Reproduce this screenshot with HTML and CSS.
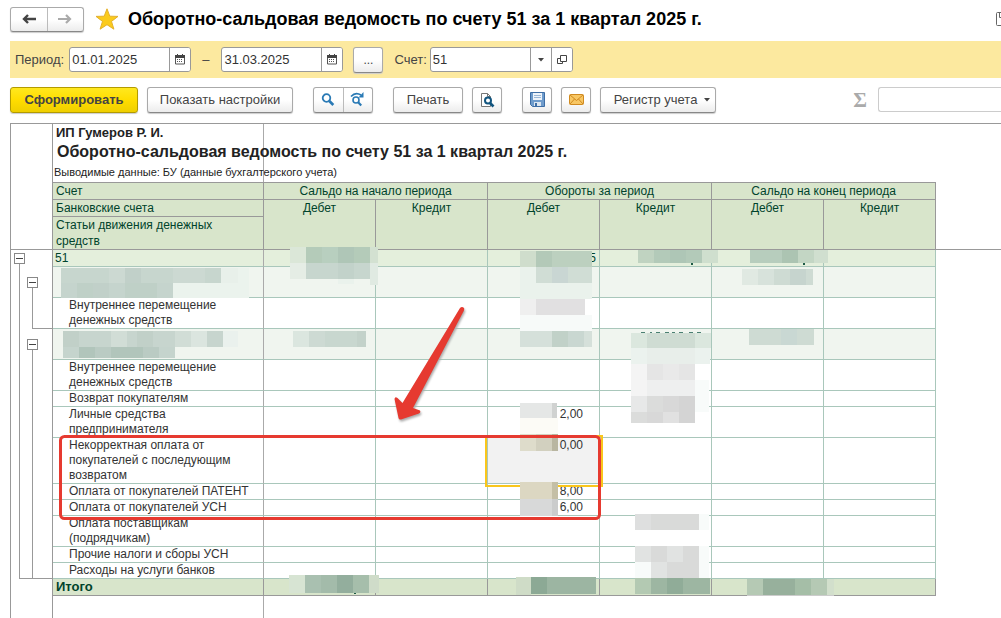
FILE: index.html
```html
<!DOCTYPE html>
<html lang="ru">
	<head>
		<meta charset="UTF-8">
		<title>Оборотно-сальдовая ведомость по счету 51</title>
		<link rel="stylesheet" href="styles.css">
	</head>
	<body>
		<header class="head">
			<div class="btnGroup nav">
				<button type="button" aria-label="Назад"><svg width="14" height="10" viewBox="0 0 14 10"><path d="M14 5H3M6 1L2 5l4 4" fill="none" stroke="#444" stroke-width="2.4"/></svg></button>
				<button type="button" aria-label="Вперед"><svg width="14" height="10" viewBox="0 0 14 10"><path d="M0 5h11M8 1l4 4-4 4" fill="none" stroke="#aaa" stroke-width="2.2"/></svg></button>
			</div>
			<svg class="star" width="24" height="22" viewBox="0 0 24 22"><path d="M12 .8l2.8 7.4 8.2.2-6.500 5 2.400 7.800L12 16.700l-6.900 4.500 2.400-7.800L1 8.400l8.200-.2z" fill="#fbcb1c" stroke="#e3b02c"/></svg>
			<h1>Оборотно-сальдовая ведомость по счету 51 за 1 квартал 2025 г.</h1>
			<svg class="save" width="5" height="15" viewBox="0 0 5 15"><path d="M6 .5H1.500q-1 0-1 1v11q0 1 1 1H6M3.500 1v4.500H6" fill="none" stroke="#666"/></svg>
		</header>

		<div class="period">
			<label for="from">Период:</label>
			<div class="field date">
				<input type="text" id="from" value="01.01.2025">
				<button type="button" aria-label="Выбрать дату"><svg width="10" height="11" viewBox="0 0 10 11"><path d="M.5 2.500h9v7.500h-9z" fill="#fff" stroke="#555"/><path d="M0 1h10v3H0zM2 0h1v2H2zM7 0h1v2H7z" fill="#444"/><path d="M2 5.500h6M2 7.500h6" stroke="#555" stroke-dasharray="1 1"/></svg></button>
			</div>
			<label for="to" class="dash">–</label>
			<div class="field date">
				<input type="text" id="to" value="31.03.2025">
				<button type="button" aria-label="Выбрать дату"><svg width="10" height="11" viewBox="0 0 10 11"><path d="M.5 2.500h9v7.500h-9z" fill="#fff" stroke="#555"/><path d="M0 1h10v3H0zM2 0h1v2H2zM7 0h1v2H7z" fill="#444"/><path d="M2 5.500h6M2 7.500h6" stroke="#555" stroke-dasharray="1 1"/></svg></button>
			</div>
			<button type="button" class="btn icon more">...</button>
			<label for="account">Счет:</label>
			<div class="field account">
				<input type="text" id="account" value="51">
				<button type="button" aria-label="Список"><svg width="6" height="4" viewBox="0 0 6 4"><path d="M0 0h6L3 3.500z" fill="#444"/></svg></button>
				<button type="button" aria-label="Открыть"><svg width="10" height="10" viewBox="0 0 10 10"><path d="M3.500.5h6v6h-6zM3 3.500H.5v5h5V7" fill="none" stroke="#444"/></svg></button>
			</div>
		</div>

		<div class="tools">
			<button type="button" class="btn main">Сформировать</button>
			<button type="button" class="btn settings">Показать настройки</button>
			<div class="btnGroup find">
				<button type="button" aria-label="Найти"><svg width="14" height="14" viewBox="0 0 14 14"><circle cx="5.500" cy="5" r="3.800" fill="none" stroke="#2a7ab5" stroke-width="1.800"/><path d="M8.300 8l4 4" stroke="#2a7ab5" stroke-width="2.600"/></svg></button>
				<button type="button" aria-label="Найти далее"><svg width="15" height="15" viewBox="0 0 15 15"><circle cx="6" cy="8" r="3" fill="none" stroke="#2a7ab5" stroke-width="1.600"/><path d="M8.200 10.200l3 3.200" stroke="#2a7ab5" stroke-width="2.200"/><path d="M1 4.500Q5.500-.5 11 3" fill="none" stroke="#2a7ab5" stroke-width="1.600"/><path d="M13.500 0v5.500H8.500z" fill="#2a7ab5"/></svg></button>
			</div>
			<button type="button" class="btn print">Печать</button>
			<button type="button" class="btn icon view" aria-label="Просмотр"><svg width="16" height="16" viewBox="0 0 16 16"><path d="M2.500 1.500h6l3 3v10h-9z" fill="#fff" stroke="#777"/><path d="M8.500 1.500v3h3" fill="none" stroke="#777"/><circle cx="9" cy="8.500" r="3" fill="#fff" stroke="#12557f" stroke-width="2"/><path d="M11 11l3.500 3.500" stroke="#12557f" stroke-width="2.600"/></svg></button>
			<button type="button" class="btn icon" aria-label="Сохранить"><svg width="15" height="15" viewBox="0 0 15 15"><path d="M.5.5h14v14h-12l-2-2z" fill="#6f9ccc" stroke="#3e6ea5"/><path d="M3 1h9v7H3z" fill="#eef4fa"/><path d="M4 3.500h7M4 5.500h7" stroke="#9bb7d6"/><path d="M4 10h7v4H4z" fill="#dce6f0"/><path d="M5 11h2v3H5z" fill="#3e6ea5"/></svg></button>
			<button type="button" class="btn icon" aria-label="Отправить"><svg width="15" height="11" viewBox="0 0 15 11"><rect x=".5" y=".5" width="14" height="10" rx="1" fill="#f8c764" stroke="#d08a20"/><path d="M1 1l6.500 5.500L14 1M1 10l4.500-5M14 10L9.500 5" fill="none" stroke="#d08a20"/></svg></button>
			<button type="button" class="btn register">Регистр учета <svg width="6" height="4" viewBox="0 0 6 4"><path d="M0 0h6L3 3.500z" fill="#444"/></svg></button>
			<label for="sum" class="sigma">Σ</label>
			<input type="text" id="sum" class="sum">
		</div>

		<div class="sheet">
			<div class="tree">
				<div class="treeHead"></div>
				<div class="treeBody">
					<button type="button" class="node" aria-label="Свернуть"></button>
					<div class="stem all">
						<button type="button" class="node" aria-label="Свернуть"></button>
						<div class="stem first"></div>
						<button type="button" class="node" aria-label="Свернуть"></button>
						<div class="stem last"></div>
					</div>
				</div>
			</div>

			<div class="report">
				<div class="titles">
					<p class="firm">ИП Гумеров Р. И.</p>
					<h2>Оборотно-сальдовая ведомость по счету 51 за 1 квартал 2025 г.</h2>
					<p class="note">Выводимые данные: БУ (данные бухгалтерского учета)</p>
				</div>
				<table>
					<colgroup>
						<col class="name"><col class="num"><col class="num"><col class="num"><col class="num"><col class="num"><col class="num"><col>
					</colgroup>
					<thead>
						<tr><th class="left">Счет</th><th colspan="2">Сальдо на начало периода</th><th colspan="2">Обороты за период</th><th colspan="2">Сальдо на конец периода</th><td rowspan="3" class="rest"></td></tr>
						<tr><th class="left">Банковские счета</th><th rowspan="2">Дебет</th><th rowspan="2">Кредит</th><th rowspan="2">Дебет</th><th rowspan="2">Кредит</th><th rowspan="2">Дебет</th><th rowspan="2">Кредит</th></tr>
						<tr><th class="left">Статьи движения денежных средств</th></tr>
					</thead>
					<tbody>
						<tr class="acc"><td>51</td><td></td><td></td><td>5</td><td></td><td></td><td></td></tr>
						<tr class="bank"><td></td><td></td><td></td><td></td><td></td><td></td><td></td></tr>
						<tr><td>Внутреннее перемещение денежных средств</td><td></td><td></td><td></td><td></td><td></td><td></td></tr>
						<tr class="bank"><td></td><td></td><td></td><td></td><td></td><td></td><td></td></tr>
						<tr><td>Внутреннее перемещение денежных средств</td><td></td><td></td><td></td><td></td><td></td><td></td></tr>
						<tr><td>Возврат покупателям</td><td></td><td></td><td></td><td></td><td></td><td></td></tr>
						<tr><td>Личные средства предпринимателя</td><td></td><td></td><td>2,00</td><td></td><td></td><td></td></tr>
						<tr><td>Некорректная оплата от покупателей с последующим возвратом</td><td></td><td></td><td class="selected">0,00</td><td></td><td></td><td></td></tr>
						<tr><td>Оплата от покупателей ПАТЕНТ</td><td></td><td></td><td>8,00</td><td></td><td></td><td></td></tr>
						<tr><td>Оплата от покупателей УСН</td><td></td><td></td><td>6,00</td><td></td><td></td><td></td></tr>
						<tr><td>Оплата поставщикам (подрядчикам)</td><td></td><td></td><td></td><td></td><td></td><td></td></tr>
						<tr><td>Прочие налоги и сборы УСН</td><td></td><td></td><td></td><td></td><td></td><td></td></tr>
						<tr><td>Расходы на услуги банков</td><td></td><td></td><td></td><td></td><td></td><td></td></tr>
					</tbody>
					<tfoot>
						<tr class="total"><td>Итого</td><td></td><td></td><td></td><td></td><td></td><td></td></tr>
					</tfoot>
				</table>
			</div>

			<!-- скрытые данные, рамка и стрелка поверх таблицы -->
			<svg class="marks" width="991" height="495" viewBox="10 123 991 495">
				<g class="mosaic">
					<!-- названия счетов -->
					<path fill="#c7d6ce" d="M61 268h160v15H61z"/><path fill="#c5d4cd" d="M61 283h112v15H61z"/>
					<path fill="#c1d0c9" d="M125 268h16v15h-16zM93 283h16v15H93z"/><path fill="#bfd0c7" d="M77 283h16v15H77zM125 283h32v15h-32z"/>
					<path fill="#ccd9d2" d="M109 268h16v15h-16zM173 268h32v15h-32z"/><path fill="#e8f0ea" d="M221 268h17v15h-17z"/><path fill="#ebf3ed" d="M173 283h76v15h-76zM238 268h11v15h-11z"/>
					<path fill="#c7d5ce" d="M63 331h160v16H63z"/><path fill="#c1d0c8" d="M63 331h16v16H63zM137 331h16v16h-16z"/><path fill="#d1ddd6" d="M111 331h16v16h-16zM175 331h16v16h-16z"/><path fill="#dbe5df" d="M191 331h16v16h-16z"/><path fill="#eaf1ed" d="M223 331h15v16h-15z"/>
					<path fill="#bacbc3" d="M63 347h112v11H63z"/><path fill="#b1c5bb" d="M79 347h16v11H79zM111 347h32v11h-32z"/><path fill="#c5d4cd" d="M63 347h16v11H63zM159 347h16v11h-16z"/>
					<!-- сальдо на начало -->
					<path fill="#dbe7d8" d="M290 247h16v16h-16z"/><path fill="#b4cbb9" d="M306 247h64v16h-64z"/><path fill="#b8cfbf" d="M322 247h16v16h-16z"/><path fill="#afc6b7" d="M338 247h16v16h-16z"/><path fill="#d3e1d1" d="M370 247h8v16h-8z"/>
					<path fill="#e5ede5" d="M290 263h16v16h-16z"/><path fill="#c7d6ce" d="M306 263h64v16h-64z"/><path fill="#c2d2ca" d="M338 263h16v16h-16z"/><path fill="#e0eae2" d="M370 263h8v22h-8z"/><path fill="#eaf2ec" d="M338 279h16v5h-16z"/>
					<path fill="#dbe6df" d="M293 331h16v16h-16z"/><path fill="#cddad3" d="M309 331h16v16h-16z"/><path fill="#c8d7cf" d="M325 331h32v16h-32z"/><path fill="#c3d2ca" d="M357 331h9v16h-9z"/>
					<path fill="#d7e4d3" d="M289 575h16v18h-16z"/><path fill="#a9c0b0" d="M305 575h16v18h-16z"/><path fill="#a3bbaa" d="M321 575h16v18h-16z"/><path fill="#93ae9d" d="M337 575h16v18h-16z"/><path fill="#a6beab" d="M353 575h16v18h-16z"/><path fill="#cfdcc9" d="M369 575h10v18h-10z"/>
					<!-- обороты, дебет -->
					<path fill="#cfddcc" d="M520 251h16v16h-16z"/><path fill="#b3c9b8" d="M536 251h16v16h-16z"/><path fill="#bcd0bf" d="M552 251h40v16h-40z"/>
					<path fill="#eaf2ec" d="M520 267h16v16h-16zM520 283h72v16h-72z"/><path fill="#d0ddd5" d="M536 267h56v16h-56z"/><path fill="#c9d6d3" d="M552 267h16v16h-16z"/>
					<path fill="#fff" d="M585 299h7v16h-7z"/><path fill="#efefef" d="M520 299h16v16h-16z"/><path fill="#e1e0e1" d="M536 299h49v16h-49z"/><path fill="#f7faf9" d="M520 315h72v16h-72z"/>
					<path fill="#d5e0da" d="M520 331h72v16h-72z"/><path fill="#c1d1c8" d="M552 331h16v16h-16z"/><path fill="#c9d7d1" d="M568 331h16v16h-16z"/>
					<path fill="#e5e7e6" d="M520 403h32v15h-32z"/><path fill="#d0d2d1" d="M552 403h5v15h-5z"/><path fill="#fcfbf6" d="M520 418h38v16h-38z"/>
					<path fill="#dedccb" d="M520 434h16v17h-16z"/><path fill="#d2d0bf" d="M536 434h16v17h-16z"/><path fill="#b9b6a1" d="M552 434h6v17h-6z"/>
					<path fill="#dcd7c2" d="M520 482h32v17h-32z"/><path fill="#c4bfa5" d="M552 482h6v17h-6z"/><path fill="#d8d9d9" d="M520 499h32v17h-32z"/><path fill="#cbcccc" d="M552 499h6v17h-6z"/>
					<path fill="#cfdcc7" d="M516 577h15v18h-15z"/><path fill="#8ca995" d="M531 577h16v17h-16z"/><path fill="#9cb5a2" d="M547 577h49v17h-49z"/>
					<!-- обороты, кредит -->
					<path fill="#c0d3c1" d="M638 250h16v13h-16z"/><path fill="#b3cab9" d="M654 250h48v13h-48z"/><path fill="#aec6b6" d="M670 250h16v13h-16z"/><path fill="#cfdfce" d="M702 250h16v13h-16z"/>
					<path fill="#4b8072" d="M641 332h4v1h-4zM650 332h2v1h-2zM656 332h4v1h-4zM665 332h4v1h-4zM672 332h3v1h-3zM679 332h4v1h-4zM689 332h4v1h-4zM697 332h4v1h-4z"/>
					<path fill="#dbe7de" d="M631 333h80v15h-80z"/><path fill="#cfdcd3" d="M647 333h48v15h-48z"/><path fill="#ebf2ee" d="M631 348h79v16h-79z"/><path fill="#e8eeea" d="M647 348h48v16h-48z"/>
					<path fill="#fff" d="M695 364h15v16h-15zM635 530h74v16h-74z"/><path fill="#f4f4f4" d="M631 364h16v32h-16z"/><path fill="#e5e5e5" d="M647 364h48v16h-48z"/><path fill="#e9e9e9" d="M663 364h16v16h-16z"/><path fill="#eeefef" d="M647 380h48v16h-48z"/><path fill="#f8fbfa" d="M695 380h14v32h-14zM699 514h10v16h-10zM699 546h10v32h-10zM635 562h16v16h-16z"/>
					<path fill="#e7e8e8" d="M631 396h16v16h-16z"/><path fill="#dbdcdb" d="M647 396h16v16h-16zM631 412h16v11h-16z"/><path fill="#d8d8d8" d="M663 396h16v16h-16zM647 412h16v11h-16z"/><path fill="#d4d4d4" d="M679 396h16v27h-16z"/><path fill="#e1e1e1" d="M663 412h16v11h-16z"/>
					<path fill="#dedfdf" d="M635 514h16v16h-16z"/><path fill="#d9dad9" d="M651 514h48v16h-48zM651 546h48v32h-48z"/><path fill="#e1e3e2" d="M635 546h16v16h-16zM667 546h16v16h-16zM651 562h16v16h-16z"/>
					<path fill="#b3c9b2" d="M635 578h16v16h-16z"/><path fill="#9db6a2" d="M651 578h59v16h-59z"/><path fill="#90ac98" d="M667 578h16v16h-16z"/>
					<!-- сальдо на конец -->
					<path fill="#b7cdbd" d="M750 250h32v13h-32z"/><path fill="#acc4b2" d="M782 250h16v13h-16z"/><path fill="#c3d6c4" d="M798 250h16v13h-16z"/><path fill="#d0dfcf" d="M814 250h14v13h-14z"/>
					<path fill="#e0e9e2" d="M742 269h16v16h-16z"/><path fill="#d7e2db" d="M758 269h16v16h-16z"/><path fill="#cedbd3" d="M774 269h39v16h-39z"/><path fill="#c6d4ce" d="M790 269h16v16h-16z"/>
					<path fill="#cedbd3" d="M749 329h65v16h-65z"/><path fill="#c9d8d3" d="M781 329h16v16h-16z"/>
					<path fill="#b5c9b4" d="M747 579h80v16h-80z"/><path fill="#97b09c" d="M763 579h32v16h-32z"/><path fill="#a5bea7" d="M795 579h16v16h-16z"/><path fill="#d2dfcc" d="M827 579h7v16h-7z"/><path fill="#ccc" d="M747 595h87v1h-87z"/>
					<path fill="#1d5a45" d="M691 263h2v2h-2zM803 263h2v2h-2zM354 593h2v1h-2z"/>
				</g>
				<rect class="frame" x="60.500" y="436.500" width="539" height="82" rx="4"/>
				<path class="arrow" d="M460 308q2-2 4 0 .5 1-.3 3L413 408l7 2.500q1 2-1 3l-18 6q-2 .5-2.500-1.500L394.500 399q.5-3 3-1l5 5z"/>
			</svg>
		</div>
	</body>
</html>
```
FILE: styles.css
```css
*{ box-sizing: border-box;}
body{ margin: 0; padding-left: 10px; min-height: 100vh; display: flex; flex-direction: column; overflow: hidden; background: #fff; color: #444; font: 13px/16px "Liberation Sans", Arial, sans-serif;}
button,input{ margin: 0; padding: 0; font: inherit; color: #444;}
h1,h2,p{ margin: 0;}
svg{ display: block; flex: none;}

/* шапка */
.head{ display: flex; align-items: center; height: 41px; padding-bottom: 3px;}
.head h1{ margin-left: 9px; font-size: 18px; line-height: 24px; color: #000; white-space: nowrap;}
.star{ margin-left: 11px;}
.save{ margin-left: auto;}

.btn,.btnGroup{ height: 26px; flex: none; border: 1px solid #aaa; border-bottom-color: #888; border-radius: 3px; background: linear-gradient(#fff 50%, #ececec); box-shadow: 0 1px 1px #ccc;}
.btn{ display: flex; align-items: center; justify-content: center; gap: 7px; white-space: nowrap;}
.btnGroup{ display: flex;}
.btnGroup button{ flex: 1; display: flex; align-items: center; justify-content: center; border: 0; background: none;}
.btnGroup button + button{ border-left: 1px solid #bbb;}
.nav{ width: 74px; height: 25px;}

/* период */
.period{ display: flex; align-items: center; height: 37px; padding-left: 5px; background: #fce99f;}
.field{ display: flex; height: 25px; border: 1px solid #999; border-radius: 3px; background: #fff; overflow: hidden;}
.field input{ flex: 1; min-width: 0; padding-left: 2px; border: 0; background: none; color: #333;}
.field button{ width: 21px; display: flex; align-items: center; justify-content: center; border: 0; border-left: 1px solid #999; background: #fff;}
.date{ width: 122px; margin-left: 5px;}
.dash{ margin-left: 11px; margin-right: 7px;}
.account{ width: 143px; margin-left: 3px;}
.icon{ width: 30px;}
.more{ margin: 0 11px 0 10px; font-size: 12px;}

/* кнопки */
.tools{ display: flex; align-items: center; height: 45px; flex: none; padding-bottom: 2px;}
.tools .icon{ margin-right: 9px;}
.main{ width: 128px; border-color: #b39b00; background: linear-gradient(#ffe81f, #ffdd00 50%, #efcf00); font-weight: bold;}
.settings{ width: 146px; margin-left: 9px;}
.find{ width: 60px; margin: 0 20px;}
.print{ width: 70px; margin-right: 9px;}
.tools .view{ margin-right: 20px;}
.register{ width: 116px; padding-left: 8px;}
.sigma{ margin-left: auto; margin-right: 11px; font: bold 21px/24px "Liberation Serif", serif; color: #aaa;}
.sum{ width: 123px; height: 25px; border: 1px solid #ccc; border-right: 0; border-radius: 3px 0 0 3px;}

/* отчет */
.sheet{ position: relative; flex: 1; display: flex; border-top: 1px solid #999; border-left: 1px solid #999; color: #333; font-size: 12px; line-height: 15px;}
.report{ flex: 1; min-width: 0; background: linear-gradient(#aaa, #aaa) 210px 0 / 1px 100% no-repeat;}
.titles{ height: 58px; white-space: nowrap; color: #222;}
.firm{ padding-left: 3px; font-size: 13px; line-height: 18px; font-weight: bold;}
.titles h2{ padding-left: 4px; font-size: 16px; line-height: 20px;}
.note{ padding: 2px 0 0 1px; font-size: 11px; line-height: 17px;}

.tree{ width: 42px; flex: none; border-right: 1px solid #999;}
.treeHead{ height: 126px; border-bottom: 1px solid #999;}
.treeBody{ padding: 3px 0 0 3px;}
.node{ display: block; width: 11px; height: 11px; border: 1px solid #888; background: linear-gradient(#444, #444) center / 7px 1px no-repeat #fff;}
.stem{ margin-left: 5px; border-left: 1px solid #999;}
.all{ height: 315px; padding: 13px 0 0 7px; border-bottom: 1px solid #999;}
.first{ height: 41px; margin-bottom: 10px; border-bottom: 1px solid #999;}
.last{ height: 228px;}

table{ width: 100%; table-layout: fixed; border-collapse: separate; border-spacing: 0;}
.name{ width: 211px;}
.num{ width: 112px;}
th,td{ padding: 0; vertical-align: top; border-right: 1px solid #a9c7bb; border-bottom: 1px solid #a9c7bb; text-align: right;}
th{ height: 17px; line-height: 16px; font-weight: normal; text-align: center; color: #00432c; background: #d8e5cb; border-color: #999;}
thead tr:first-child th{ height: 18px; border-top: 1px solid #999;}
.left{ padding: 0 16px 0 3px; text-align: left;}
.rest{ border-right: 0; border-color: #999;}
tbody td{ padding-right: 16px;}
tbody td:first-child{ padding: 0 0 0 16px; text-align: left; border-right-color: #aaa;}
.acc td{ height: 17px; padding-right: 3px; line-height: 16px; background: #e4efdc; color: #00432c;}
tbody .acc td:first-child{ padding-left: 2px;}
.bank td{ height: 31px; background: #f0f5ef;}
td.selected{ background: #f2f2f2; outline: 2px solid #f9c61c; outline-offset: 1px;}
.total td{ height: 17px; line-height: 16px; padding-left: 3px; text-align: left; font-size: 13px; font-weight: bold; color: #00432c; background: #d8e5cb; border-color: #999;}

.marks{ position: absolute; top: -1px; left: -1px; pointer-events: none;}
.mosaic{ shape-rendering: crispEdges;}
.frame{ fill: none; stroke: #e63a30; stroke-width: 3;}
.arrow{ fill: #e63a30; filter: drop-shadow(1px 2px 1px #aaa);}
```
